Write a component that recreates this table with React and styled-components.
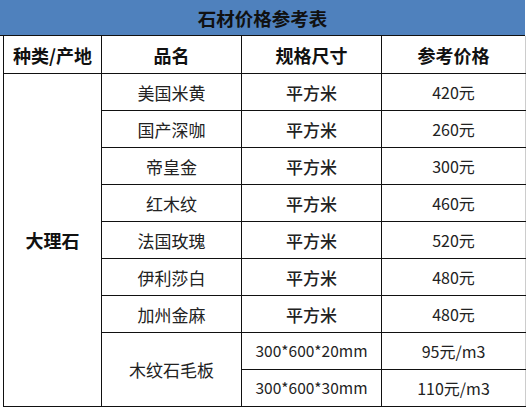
import React from "react";
import styled, { createGlobalStyle } from "styled-components";

const Global = createGlobalStyle`
  html, body { margin: 0; padding: 0; background: #fff; }
  body { font-family: "Noto Sans CJK SC", "Noto Sans", sans-serif; }
`;

const Wrap = styled.div`
  width: 525px;
  display: flex;
  flex-direction: column;
`;

const Title = styled.div`
  height: 35px;
  background: #4f81bd;
  border-bottom: 1px solid #111;
  display: flex;
  align-items: center;
  justify-content: center;
  font-size: 18.5px;
  font-weight: 700;
  color: #111;
`;

const Table = styled.table`
  margin-left: 3px;
  width: 522px;
  border-collapse: collapse;
  table-layout: fixed;
  border-left: 1.5px solid #111;
  border-bottom: 1.5px solid #111;
`;

const Cell = styled.td`
  border-right: 1.5px solid #111;
  border-bottom: 1.5px solid #111;
  text-align: center;
  vertical-align: middle;
  height: ${(p) => p.$h || 36}px;
  padding: 0;
  font-size: ${(p) => p.$size || 17}px;
  font-weight: ${(p) => p.$weight || 400};
  color: ${(p) => (p.$weight >= 700 ? "#111" : "#222")};
  line-height: 1;
  white-space: nowrap;
  &:last-child { border-right: 1px solid #ccc; }
`;

const rows = [
  ["美国米黄", "平方米", "420元"],
  ["国产深咖", "平方米", "260元"],
  ["帝皇金", "平方米", "300元"],
  ["红木纹", "平方米", "460元"],
  ["法国玫瑰", "平方米", "520元"],
  ["伊利莎白", "平方米", "480元"],
  ["加州金麻", "平方米", "480元"],
];

export default function App() {
  return (
    <>
      <Global />
      <Wrap>
        <Title>石材价格参考表</Title>
        <Table>
          <colgroup>
            <col style={{ width: 98 }} />
            <col style={{ width: 140 }} />
            <col style={{ width: 140 }} />
            <col style={{ width: 144 }} />
          </colgroup>
          <tbody>
            <tr>
              <Cell $weight={700} $size={18} $h={37}>种类/产地</Cell>
              <Cell $weight={700} $size={18} $h={37}>品名</Cell>
              <Cell $weight={700} $size={18} $h={37}>规格尺寸</Cell>
              <Cell $weight={700} $size={18} $h={37}>参考价格</Cell>
            </tr>
            {rows.map((r, i) => (
              <tr key={r[0]}>
                {i === 0 && (
                  <Cell $weight={700} $size={18} rowSpan={9}>大理石</Cell>
                )}
                <Cell>{r[0]}</Cell>
                <Cell $weight={500}>{r[1]}</Cell>
                <Cell $size={16}>{r[2]}</Cell>
              </tr>
            ))}
            <tr>
              <Cell rowSpan={2}>木纹石毛板</Cell>
              <Cell $size={15.5}>300*600*20mm</Cell>
              <Cell $size={16}>95元/m3</Cell>
            </tr>
            <tr>
              <Cell $size={15.5}>300*600*30mm</Cell>
              <Cell $size={16}>110元/m3</Cell>
            </tr>
          </tbody>
        </Table>
      </Wrap>
    </>
  );
}
